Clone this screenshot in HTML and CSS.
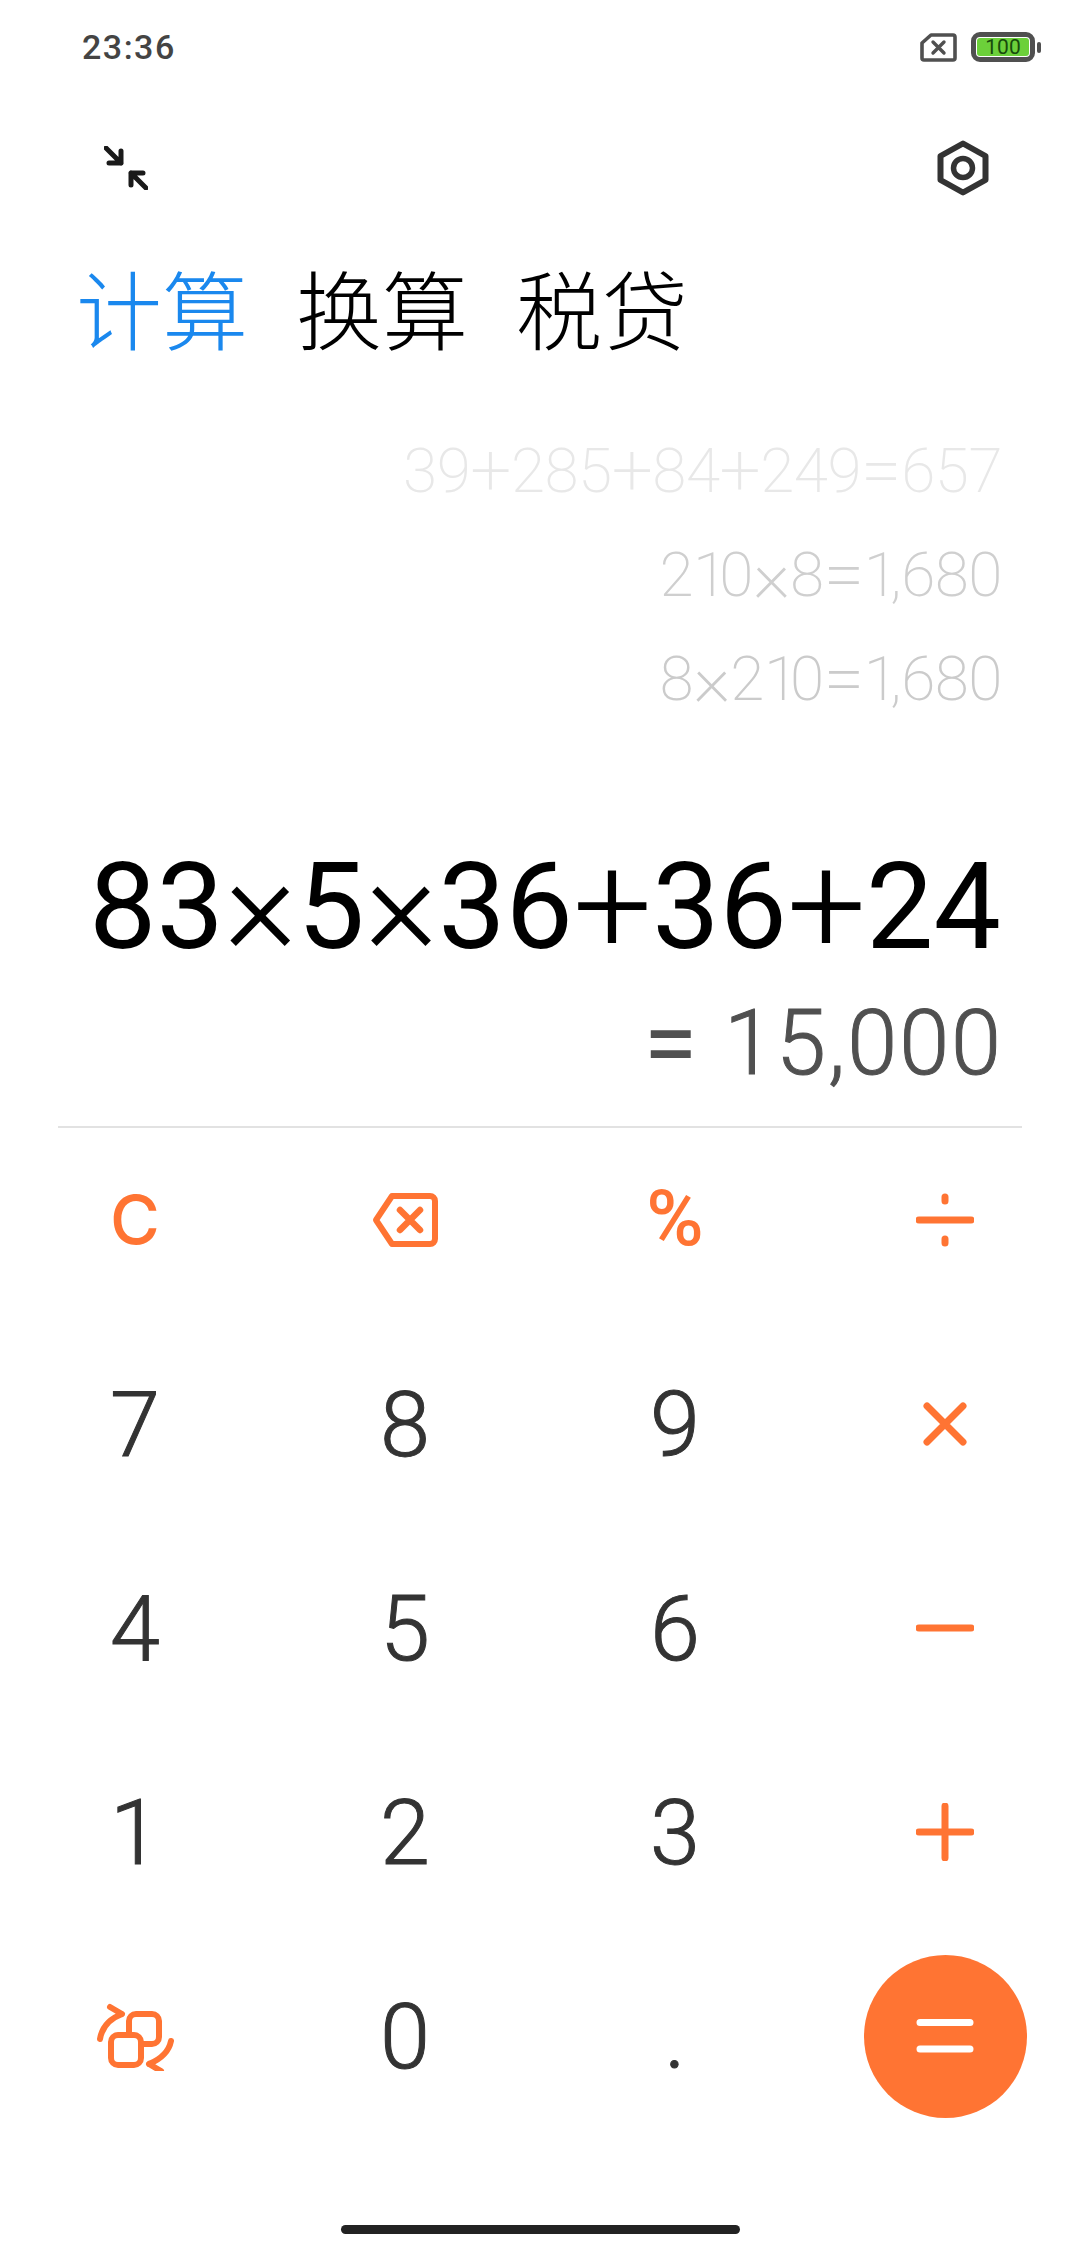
FILE: index.html
```html
<!DOCTYPE html>
<html lang="zh">
<head>
<meta charset="utf-8">
<title>计算器</title>
<link rel="stylesheet" href="styles.css">
</head>
<body>
<main class="app">
  <header class="status">
    <span class="clock">23:36</span>
    <div class="status-icons">
      <svg class="sim" width="37" height="29" viewBox="0 0 37 29"><path d="M11 2H33a2 2 0 0 1 2 2V25a2 2 0 0 1-2 2H4a2 2 0 0 1-2-2V10Z" fill="none" stroke="#505050" stroke-width="3.600" stroke-linejoin="round"/><path d="M13 9L24 20M24 9L13 20" fill="none" stroke="#505050" stroke-width="3.400" stroke-linecap="round"/></svg>
      <div class="battery"><div class="battery-body"><span class="battery-fill">100</span></div><i class="battery-nub"></i></div>
    </div>
  </header>
  <div class="toolbar">
    <svg class="collapse" width="44" height="44" viewBox="0 0 44 44"><path d="M2 2L17 17M5 17H17V5" fill="none" stroke="#1a1a1a" stroke-width="5" stroke-linecap="round" stroke-linejoin="round"/><path d="M42 42L27 27M39 27H27V39" fill="none" stroke="#1a1a1a" stroke-width="5" stroke-linecap="round" stroke-linejoin="round"/></svg>
    <svg class="gear" width="52" height="56" viewBox="0 0 52 56"><path d="M26 3.500L48.500 16V40L26 52.500L3.500 40V16Z" fill="none" stroke="#333" stroke-width="6" stroke-linejoin="round"/><circle cx="26" cy="28" r="9.500" fill="none" stroke="#333" stroke-width="5.500"/></svg>
  </div>
  <nav class="tabs">
    <span class="tab tab-active">计算</span>
    <span class="tab">换算</span>
    <span class="tab">税贷</span>
  </nav>
  <section class="history">
    <div class="history-line faint">39<span class="hop">+</span>285<span class="hop">+</span>84<span class="hop">+</span>249<span class="hop">=</span>657</div>
    <div class="history-line mid">2<span class="one">1</span>0<span class="hop">×</span>8<span class="hop">=</span><span class="one">1</span>,680</div>
    <div class="history-line">8<span class="hop">×</span>2<span class="one">1</span>0<span class="hop">=</span><span class="one">1</span>,680</div>
  </section>
  <div class="expression">83<span class="op op-times">×</span>5<span class="op op-times">×</span>36<span class="op">+</span>36<span class="op">+</span>24</div>
  <div class="result"><span class="result-eq">=</span> 15,000</div>
  <hr class="divider">
  <section class="keypad">
    <div class="key letter-key">C</div>
    <div class="key"><svg width="66" height="54" viewBox="0 0 66 54"><path d="M20 3H58a5 5 0 0 1 5 5V46a5 5 0 0 1-5 5H20L4 27Z" fill="none" stroke="#ff7433" stroke-width="6" stroke-linejoin="round"/><path d="M28 17L48 37M48 17L28 37" fill="none" stroke="#ff7433" stroke-width="6.500" stroke-linecap="round"/></svg></div>
    <div class="key percent-key">%</div>
    <div class="key"><svg width="58" height="56" viewBox="0 0 58 56"><path d="M3 28H55M29 5V9M29 47V51" fill="none" stroke="#ff7433" stroke-width="7" stroke-linecap="round"/></svg></div>

    <div class="key digit">7</div>
    <div class="key digit">8</div>
    <div class="key digit">9</div>
    <div class="key"><svg width="44" height="44" viewBox="0 0 44 44"><path d="M4 4L40 40M40 4L4 40" fill="none" stroke="#ff7433" stroke-width="7" stroke-linecap="round"/></svg></div>

    <div class="key digit">4</div>
    <div class="key digit">5</div>
    <div class="key digit">6</div>
    <div class="key"><svg width="58" height="8" viewBox="0 0 58 8"><path d="M3 4H55" fill="none" stroke="#ff7433" stroke-width="7" stroke-linecap="round"/></svg></div>

    <div class="key digit">1</div>
    <div class="key digit">2</div>
    <div class="key digit">3</div>
    <div class="key"><svg width="58" height="58" viewBox="0 0 58 58"><path d="M3 29H55M29 3V55" fill="none" stroke="#ff7433" stroke-width="7" stroke-linecap="round"/></svg></div>

    <div class="key"><svg width="78" height="70" viewBox="0 0 78 70"><rect x="33" y="13" width="30" height="30" rx="7" fill="none" stroke="#ff7433" stroke-width="6"/><rect x="15" y="34" width="30" height="30" rx="7" fill="#fff" stroke="#ff7433" stroke-width="6"/><path d="M4 38C6 26 13 18 26 13M14 6L26 13" fill="none" stroke="#ff7433" stroke-width="6" stroke-linecap="round" stroke-linejoin="round"/><path d="M75 40C73 50 65 58 53 63M65 70L53 63" fill="none" stroke="#ff7433" stroke-width="6" stroke-linecap="round" stroke-linejoin="round"/></svg></div>
    <div class="key digit">0</div>
    <div class="key digit">.</div>
    <div class="key"><div class="equals"><svg width="58" height="36" viewBox="0 0 58 36"><path d="M4 4.500H54M4 31H54" fill="none" stroke="#fff" stroke-width="7" stroke-linecap="round"/></svg></div></div>
  </section>
  <div class="home-row"><div class="home-bar"></div></div>
</main>
</body>
</html>
```

FILE: styles.css
```css
* { box-sizing: border-box; }
html, body { margin: 0; padding: 0; background: #fff; }
.app {
  width: 1080px;
  height: 2248px;
  overflow: hidden;
  font-family: Roboto, "Noto Sans CJK SC", sans-serif;
  display: flex;
  flex-direction: column;
}
.status {
  height: 94px;
  padding: 0 39px 0 82px;
  display: flex;
  align-items: center;
  justify-content: space-between;
}
.clock { font-size: 34px; font-weight: 500; color: #444; letter-spacing: 1.5px; }
.status-icons { display: flex; align-items: center; gap: 14px; }
.battery { display: flex; align-items: center; gap: 2px; }
.battery-body {
  width: 64px;
  height: 30px;
  border: 5px solid #505050;
  border-radius: 9px;
  padding: 1px;
  display: flex;
}
.battery-fill {
  flex: 1;
  background: #6cd03a;
  border-radius: 3px;
  color: #174a0c;
  font-size: 21px;
  line-height: 18px;
  text-align: center;
}
.battery-nub { width: 4px; height: 11px; background: #505050; border-radius: 2px; }
.toolbar {
  height: 148px;
  padding: 0 91px 0 104px;
  display: flex;
  align-items: center;
  justify-content: space-between;
}
.tabs {
  height: 130px;
  padding-left: 76px;
  display: flex;
  align-items: center;
  gap: 48px;
}
.tab {
  font-family: "Noto Sans CJK SC", sans-serif;
  font-size: 86px;
  font-weight: 300;
  line-height: 130px;
  color: #000;
}
.tab-active { color: #1a88ee; }
.history {
  padding: 47px 78px 0 0;
  display: flex;
  flex-direction: column;
  align-items: flex-end;
}
.history-line {
  height: 104px;
  line-height: 104px;
  font-size: 62px;
  font-weight: 200;
  letter-spacing: -0.5px;
  color: #cbcbcb;
}
.hop { font-size: 73px; line-height: 0; vertical-align: -3px; }
.one { letter-spacing: -8px; }
.history-line.faint { color: #e8e8e8; }
.history-line.mid { color: #cfcfcf; }
.expression {
  margin-top: 106px;
  padding-right: 79px;
  text-align: right;
  font-size: 120px;
  line-height: 140px;
  color: #000;
}
.op { font-size: 140px; font-weight: 300; line-height: 0; vertical-align: -5px; }
.result {
  margin-top: 12px;
  padding-right: 77px;
  text-align: right;
  font-size: 90px;
  font-weight: 300;
  letter-spacing: 2px;
  line-height: 110px;
  color: #505050;
  -webkit-text-stroke: 1px #505050;
}
.result-eq { font-size: 98px; font-weight: 400; line-height: 0; vertical-align: -3px; margin-right: 1px; -webkit-text-stroke: 0; }
.divider {
  margin: 27px 58px 0;
  border: 0;
  height: 2px;
  background: #e2e2e2;
}
.keypad {
  margin-top: -10px;
  display: grid;
  grid-template-columns: repeat(4, 270px);
  grid-template-rows: repeat(5, 204px);
}
.key {
  display: flex;
  align-items: center;
  justify-content: center;
}
.digit { font-size: 90px; font-weight: 300; color: #333; padding-top: 3px; -webkit-text-stroke: 1px #333; }
.letter-key { font-family: Inter, Roboto, sans-serif; font-size: 68px; font-weight: 500; color: #ff7433; padding-bottom: 2px; }
.percent-key { font-size: 78px; font-weight: 500; color: #ff7433; padding-bottom: 3px; }
.equals {
  width: 163px;
  height: 163px;
  border-radius: 50%;
  background: #ff7433;
  display: flex;
  align-items: center;
  justify-content: center;
}
.home-row {
  flex: 1;
  display: flex;
  justify-content: center;
  padding-top: 87px;
}
.home-bar { width: 399px; height: 9px; border-radius: 5px; background: #222; }
```
